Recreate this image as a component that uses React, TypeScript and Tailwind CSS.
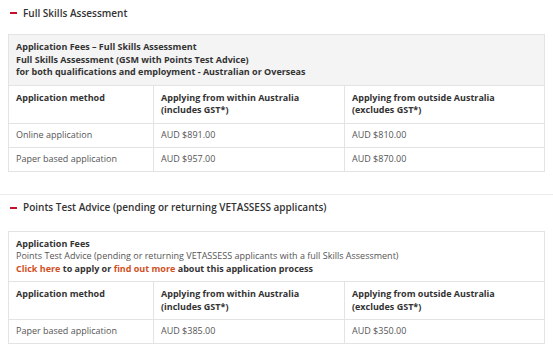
const font = { fontFamily: '"Open Sans", "Liberation Sans", sans-serif' };

function Heading({ children }: { children: React.ReactNode }) {
  return (
    <div className="flex items-center h-[24px] pl-[10px]">
      <span className="block w-[7px] h-[2px] bg-[#c8102e] mr-[6px]" />
      <span className="text-[10px] font-semibold text-[#333]">{children}</span>
    </div>
  );
}

function HeadRow() {
  return (
    <tr className="font-bold text-[#333]">
      <td className="border border-[#e3e3e3] px-[7px] pt-[6px] pb-[6px] align-top h-[37px]">Application method</td>
      <td className="border border-[#e3e3e3] px-[7px] pt-[6px] pb-[6px] align-top">
        Applying from within Australia
        <br />
        (includes GST*)
      </td>
      <td className="border border-[#e3e3e3] px-[7px] pt-[6px] pb-[6px] align-top">
        Applying from outside Australia
        <br />
        (excludes GST*)
      </td>
    </tr>
  );
}

function FeeRow({ method, within, outside }: { method: string; within: string; outside: string }) {
  return (
    <tr className="text-[#555]">
      <td className="border border-[#e3e3e3] px-[7px] h-[24px]">{method}</td>
      <td className="border border-[#e3e3e3] px-[7px]">{within}</td>
      <td className="border border-[#e3e3e3] px-[7px]">{outside}</td>
    </tr>
  );
}

export default function App() {
  return (
    <div className="w-[553px] h-[351px] bg-white overflow-hidden" style={font}>
      {/* Full Skills Assessment */}
      <section className="pt-[1px]">
        <Heading>Full Skills Assessment</Heading>
        <div className="pl-[8px] pt-[9px]">
          <table className="w-[537px] border-collapse table-fixed text-[9px] leading-[12.5px]">
            <colgroup>
              <col className="w-[145px]" />
              <col className="w-[191px]" />
              <col />
            </colgroup>
            <tbody>
              <tr>
                <td colSpan={3} className="border border-[#e3e3e3] bg-[#f4f4f4] px-[7px] pt-[6px] pb-[6px] font-bold text-[#333]">
                  Application Fees – Full Skills Assessment
                  <br />
                  Full Skills Assessment (GSM with Points Test Advice)
                  <br />
                  for both qualifications and employment - Australian or Overseas
                </td>
              </tr>
              <HeadRow />
              <FeeRow method="Online application" within="AUD $891.00" outside="AUD $810.00" />
              <FeeRow method="Paper based application" within="AUD $957.00" outside="AUD $870.00" />
            </tbody>
          </table>
        </div>
      </section>

      {/* Points Test Advice */}
      <section className="mt-[22px] border-t border-[#ececec] pt-[1px]">
        <Heading>Points Test Advice (pending or returning VETASSESS applicants)</Heading>
        <div className="pl-[8px] pt-[11px]">
          <table className="w-[537px] border-collapse table-fixed text-[9px] leading-[12.5px]">
            <colgroup>
              <col className="w-[145px]" />
              <col className="w-[191px]" />
              <col />
            </colgroup>
            <tbody>
              <tr>
                <td colSpan={3} className="border border-[#e3e3e3] bg-white px-[7px] pt-[6px] pb-[6px] text-[#555]">
                  <span className="font-bold text-[#333]">Application Fees</span>
                  <br />
                  Points Test Advice (pending or returning VETASSESS applicants with a full Skills Assessment)
                  <br />
                  <span className="font-bold text-[#333]">
                    <a className="text-[#d1501f]">Click here</a> to apply or{' '}
                    <a className="text-[#d1501f]">find out more</a> about this application process
                  </span>
                </td>
              </tr>
              <HeadRow />
              <FeeRow method="Paper based application" within="AUD $385.00" outside="AUD $350.00" />
            </tbody>
          </table>
        </div>
      </section>
    </div>
  );
}
